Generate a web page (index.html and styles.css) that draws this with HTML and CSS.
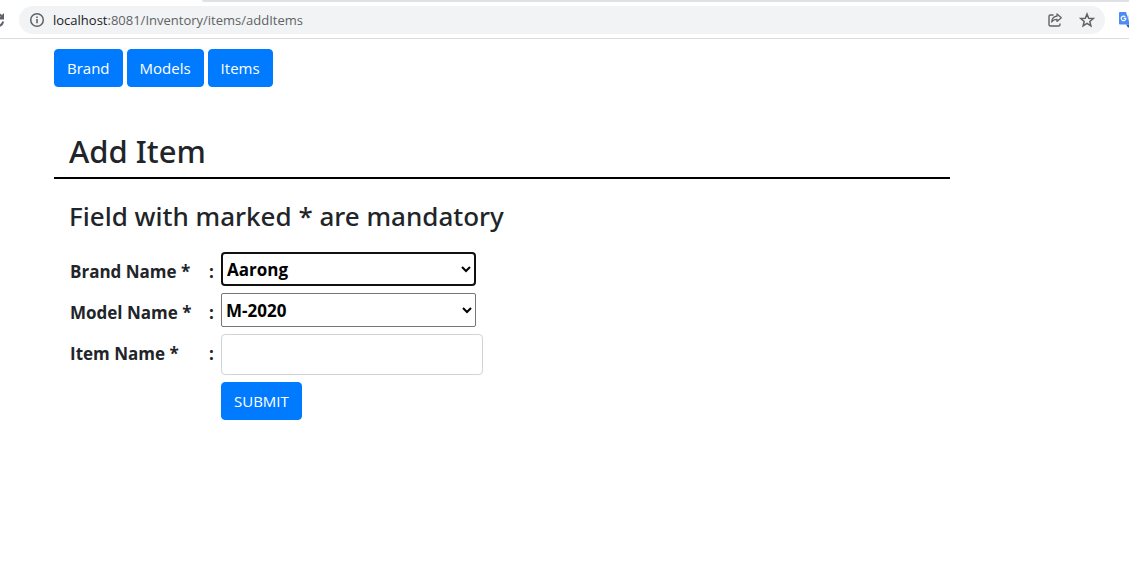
FILE: index.html
```
<!DOCTYPE html>
<html lang="en">
<head>
<meta charset="utf-8">
<title>Add Item</title>
<link rel="stylesheet" href="styles.css">
</head>
<body>
<header class="browser">
  <div class="tabstrip"></div>
  <div class="toolbar">
    <button class="icon-btn reload" type="button" aria-label="Reload">
      <svg width="16" height="16" viewBox="0 0 16 16"><path d="M14.200 9.500A6 6 0 1 1 12.500 4" fill="none" stroke="#5f6368" stroke-width="2"/><path d="M15 1V7.500H8.500z" fill="#5f6368"/></svg>
    </button>
    <div class="omnibox">
      <svg width="16" height="16" viewBox="0 0 16 16"><circle cx="8" cy="8" r="6.300" fill="none" stroke="#5f6368" stroke-width="1.500"/><path d="M7.200 7h1.600v4.300H7.200zM7.200 4.500h1.600v1.600H7.200z" fill="#5f6368"/></svg>
      <span class="url"><span class="host">localhost</span>:8081/Inventory/items/addItems</span>
      <button class="icon-btn" type="button" aria-label="Share">
        <svg width="16" height="16" viewBox="0 0 16 16"><path d="M6.500 3H3.500Q2 3 2 4.500V12.500Q2 14 3.500 14H11.500Q13 14 13 12.500V11.500" fill="none" stroke="#5f6368" stroke-width="1.400"/><path d="M10 2L14.300 5.700L10 9.400V7.300C7.500 7.200 6 8 4.700 10C5 6.500 7 4.500 10 4.200z" fill="none" stroke="#5f6368" stroke-width="1.300" stroke-linejoin="round"/></svg>
      </button>
      <button class="icon-btn" type="button" aria-label="Bookmark">
        <svg width="16" height="16" viewBox="0 0 16 16"><path d="M8 2L9.700 6.200L14.200 6.500L10.800 9.400L11.900 13.800L8 11.400L4.100 13.800L5.200 9.400L1.800 6.500L6.300 6.200z" fill="none" stroke="#5f6368" stroke-width="1.500"/></svg>
      </button>
    </div>
    <button class="icon-btn translate" type="button" aria-label="Translate">
      <svg width="16" height="16" viewBox="0 0 16 16"><path d="M6 3.500H15V16H10z" fill="#dadce0"/><path d="M7 12.500H11L9.300 16z" fill="#3256b0"/><path d="M1 0H7L11 12.500H1Q0 12.500 0 11.500V1Q0 0 1 0z" fill="#4c8bf5"/><path d="M6.200 4.800A2.300 2.300 0 1 0 6.800 6.400H4.700" fill="none" stroke="#fff" stroke-width="1.200"/></svg>
    </button>
  </div>
</header>
<main class="page">
  <nav class="menu">
    <button class="btn" type="button">Brand</button>
    <button class="btn" type="button">Models</button>
    <button class="btn" type="button">Items</button>
  </nav>
  <h1 class="title">Add Item</h1>
  <section class="content">
    <h2 class="note">Field with marked * are mandatory</h2>
    <form class="form">
      <label for="brand">Brand Name *</label><span>:</span>
      <select id="brand" class="select active"><option>Aarong</option></select>
      <label for="model">Model Name *</label><span>:</span>
      <select id="model" class="select"><option>M-2020</option></select>
      <label for="item">Item Name *</label><span>:</span>
      <input id="item" class="input" type="text">
      <button class="btn submit" type="button">SUBMIT</button>
    </form>
  </section>
</main>
</body>
</html>
```
FILE: styles.css
```
* { box-sizing: border-box; }
body {
  margin: 0;
  background: #fff;
  color: #212529;
  font: 15px/24px "Segoe UI", "Open Sans", "Noto Sans", sans-serif;
  overflow-x: hidden;
}
.browser { border-bottom: 1px solid #d9dbde; overflow: hidden; }
.tabstrip { height: 2px; margin-left: 202px; background: #dee1e6; border-bottom-left-radius: 4px; }
.toolbar { display: flex; align-items: center; height: 36px; }
.icon-btn { display: flex; flex: none; padding: 0; border: 0; background: none; }
.reload { margin-left: -11px; margin-right: 14px; }
.omnibox {
  display: flex;
  flex: 1;
  align-items: center;
  gap: 16px;
  height: 28px;
  padding: 0 10px;
  border-radius: 14px;
  background: #f1f3f4;
}
.url { flex: 1; margin-left: -8px; font-size: 13px; line-height: 20px; color: #5f6368; }
.host { color: #202124; }
.translate { margin-left: 14px; margin-right: -6px; }
.page { padding: 10px 0 0 54px; }
.menu { display: flex; gap: 4px; }
.btn {
  padding: 6px 12px;
  border: 1px solid #007bff;
  border-radius: 4px;
  background: #007bff;
  color: #fff;
  font: inherit;
}
.title, .note { font-family: "Segoe UI", "Noto Sans", "Open Sans", sans-serif; font-weight: 500; }
.title {
  width: 83.3333%;
  margin: 44px 0 0;
  padding: 0 15px 6px;
  border-bottom: 2px solid #000;
  font-size: 31px;
  line-height: 40px;
}
.content { padding: 20px 15px; }
.note { margin: 0 0 18px; font-size: 26px; line-height: 35px; }
.form {
  display: grid;
  grid-template-columns: 139px 12px minmax(0, 262px);
  row-gap: 7px;
  align-items: start;
  padding-left: 1px;
  font-size: 17px;
  font-weight: 700;
}
.form label, .form span { padding-top: 8px; }
.form label { justify-self: start; }
.select {
  width: 255px;
  height: 34px;
  padding: 0;
  border: 1px solid #767676;
  border-radius: 2px;
  background: #fff;
  color: #000;
  font: inherit;
}
.active { border: 2px solid #101010; border-radius: 4px; }
.input {
  width: 100%;
  height: 41px;
  padding: 6px 12px;
  border: 1px solid #ced4da;
  border-radius: 4px;
  font: inherit;
}
.submit { grid-column: 3; justify-self: start; font-size: 15px; font-weight: 400; }
```
